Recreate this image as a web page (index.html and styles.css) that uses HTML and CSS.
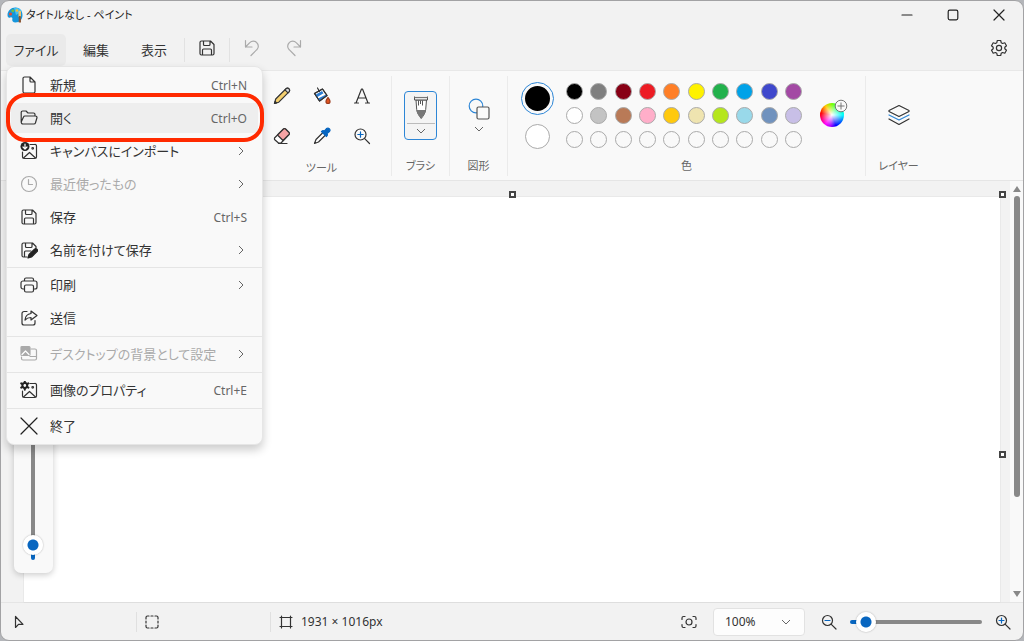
FILE: index.html
```html
<!DOCTYPE html>
<html lang="ja">
<head>
<meta charset="utf-8">
<meta name="viewport" content="width=device-width, initial-scale=1">
<title>タイトルなし - ペイント</title>
<link rel="stylesheet" href="styles.css">
</head>
<body>
<svg class="sprite" aria-hidden="true">
  <symbol id="chev-right" viewBox="0 0 8 10"><path d="M2 1l4 4-4 4"/></symbol>
  <symbol id="chev-down" viewBox="0 0 10 8"><path d="M1 2l4 4 4-4"/></symbol>
  <symbol id="save" viewBox="0 0 18 18"><path d="M3.500 2h9L16 5.500v9a1.500 1.500 0 0 1-1.500 1.500h-11A1.500 1.500 0 0 1 2 14.500v-11A1.500 1.500 0 0 1 3.500 2zM5.500 2v3.500a1 1 0 0 0 1 1h4.500a1 1 0 0 0 1-1V2M4.500 16v-5a1 1 0 0 1 1-1h7a1 1 0 0 1 1 1v5"/></symbol>
</svg>
<div class="window">
  <header class="titlebar">
    <svg class="app-icon" viewBox="0 0 16 16">
      <path d="M8.500.5C4 .5.500 4 .500 8c0 2.500 1.200 3 2.800 2.500 1.500-.5 2.500.3 2 1.800-.4 1.900.7 3.200 3.200 3.200 4.300 0 7-3.200 7-7.500s-3-7.500-7-7.500z" fill="#1696dc"/>
      <path d="M7 1c3-1 6.500 0 8 3.500L9 8z" fill="#45c0f0"/>
      <circle cx="3.500" cy="7" r="1.600" fill="#e24b35"/><circle cx="5.800" cy="3.800" r="1.500" fill="#6cc04a"/><circle cx="10" cy="3.500" r="1.300" fill="#f4bd35"/>
      <path d="M11.500 4.500c.5-1 2-1 2.500 0V10h-2.500z" fill="#f2c16b"/><path d="M11.800 9h1.900l.3 6.500h-2.300z" fill="#8b5633"/>
    </svg>
    <h1 class="title">タイトルなし - ペイント</h1>
    <div class="window-controls">
      <button class="win-btn" aria-label="最小化"><svg class="ico dark" viewBox="0 0 12 12"><path d="M1 6h10"/></svg></button>
      <button class="win-btn" aria-label="最大化"><svg class="ico dark" viewBox="0 0 12 12"><rect x="1.200" y="1.200" width="9.600" height="9.600" rx="1.500"/></svg></button>
      <button class="win-btn" aria-label="閉じる"><svg class="ico dark" viewBox="0 0 12 12"><path d="M1 1l10 10M11 1L1 11"/></svg></button>
    </div>
  </header>

  <nav class="menubar">
    <button class="tab open">ファイル</button>
    <button class="tab">編集</button>
    <button class="tab">表示</button>
    <span class="vsep"></span>
    <button class="tool-btn" aria-label="保存"><svg class="ico i18"><use href="#save"/></svg></button>
    <span class="vsep"></span>
    <button class="tool-btn" aria-label="元に戻す"><svg class="ico i18 faded" viewBox="0 0 18 18"><path d="M2.500 1.500v6.500h6.500M2.500 8l4.300-4.300a4.800 4.800 0 0 1 7 0 4.800 4.800 0 0 1 0 7L8 16.500"/></svg></button>
    <button class="tool-btn" aria-label="やり直し"><svg class="ico i18 faded" viewBox="0 0 18 18"><path d="M15.500 1.500v6.500H9M15.500 8l-4.300-4.300a4.800 4.800 0 0 0-7 0 4.800 4.800 0 0 0 0 7L10 16.500"/></svg></button>
    <button class="win-btn settings" aria-label="設定"><svg class="ico i18" viewBox="0 0 18 18"><circle cx="9" cy="9" r="2.600"/><path d="M7.300 1.500h3.400l.5 2.200 1.400.8 2.200-.7 1.700 2.900-1.700 1.500v1.600l1.700 1.500-1.700 2.900-2.200-.7-1.400.8-.5 2.200H7.300l-.5-2.200-1.400-.8-2.200.7-1.700-2.900 1.700-1.500V8.200L1.500 6.700l1.700-2.900 2.200.7 1.400-.8z"/></svg></button>
  </nav>

  <section class="ribbon">
    <div class="group tools">
      <div class="group-body tool-grid">
        <button class="tool-btn" aria-label="鉛筆"><svg class="ico i18" viewBox="0 0 18 18"><path d="M1.500 16.500l1.200-4.500L13 1.800a2 2 0 0 1 3 3L5.800 15.200z" fill="#f5d06f"/><path d="M12 2.800L13 1.800a2 2 0 0 1 3 3l-1 1z" fill="#ddd"/><path d="M1.500 16.500l.6-2 1.500 1.400z" fill="#333"/></svg></button>
        <button class="tool-btn" aria-label="塗りつぶし"><svg class="ico i18" viewBox="0 0 18 18"><path d="M1.500 6.500L9.500 2l4.500 6.500L6.500 14z" fill="#fff"/><path d="M2.500 7.800L9 4l1.500 2.200-6.500 4zM5 11.500l7.500-3.800 1 .8L6.500 13.500z" fill="#2c7dd2" stroke="none"/><path d="M1.500 6.500L9.500 2l4.500 6.500L6.500 14zM4.500 1l2 3.500"/><path d="M15 10.500c1 1.500 2 2.700 2 4a2 2 0 0 1-4 0c0-1.300 1-2.500 2-4z" fill="#e05520" stroke="#9c3b1d"/></svg></button>
        <button class="tool-btn" aria-label="テキスト"><svg class="ico i18" viewBox="0 0 18 18"><path d="M3 16L8.500 2h1L15 16M5 11h8M1.500 16h4M12.500 16h4"/></svg></button>
        <button class="tool-btn" aria-label="消しゴム"><svg class="ico i18" viewBox="0 0 18 18"><path d="M1.500 11L10.500 2a1.500 1.500 0 0 1 2 0L16 5.500a1.500 1.500 0 0 1 0 2L8 16H5.500L1.500 12.500z" fill="#fff"/><path d="M4.500 8l6-6a1.500 1.500 0 0 1 2 0L16 5.500a1.500 1.500 0 0 1 0 2l-6 6z" fill="#f6a4a5"/><path d="M5.500 16.500H14"/></svg></button>
        <button class="tool-btn" aria-label="スポイト"><svg class="ico i18" viewBox="0 0 18 18"><path d="M9.500 6L3 12.500l-1.500 4 4-1.500L12 8.500" fill="#fff"/><path d="M8.500 4.500l1.500-1 1.500.5 2-2.400c2-1.500 4.500.9 3 2.900L14 6.500l.5 1.500-1 1.500z" fill="#0866c0" stroke="#0866c0"/></svg></button>
        <button class="tool-btn" aria-label="拡大鏡"><svg class="ico i18" viewBox="0 0 18 18"><circle cx="7.500" cy="7.500" r="5.500"/><path d="M11.700 11.700L16.500 16.500"/><path d="M4.800 7.500h5.400M7.500 4.800v5.400" stroke="#0866c0"/></svg></button>
      </div>
      <h2 class="caption">ツール</h2>
    </div>

    <div class="group narrow">
      <div class="group-body">
        <button class="brush" aria-label="ブラシ">
          <svg class="brush-art" viewBox="0 0 18 26"><path d="M4 5h10.500l-.8 9.500c-.3 3.500-2.500 6.500-4.500 9-2-2.500-4.200-5.500-4.500-9z" fill="#fff" stroke="#555"/><path d="M4.500 15h9.300c-.3 3.500-2.600 6-4.600 8.500-2-2.500-4.400-5-4.700-8.500z" fill="#777"/><path d="M2.500 1.500v3.500h13V1.500" fill="#e6e6e6" stroke="#555"/><path d="M2.500 2.500h13" stroke="#777"/><path d="M6.500 5.500v5M8.500 5.500v3.500M10.500 5.500v5" stroke="#555" fill="none"/></svg>
          <span class="brush-more"><svg class="chev"><use href="#chev-down"/></svg></span>
        </button>
      </div>
      <h2 class="caption">ブラシ</h2>
    </div>

    <div class="group narrow">
      <div class="group-body">
        <button class="shapes" aria-label="図形">
          <svg class="ico i22" viewBox="0 0 22 22"><circle cx="8" cy="8" r="6.800" stroke="#2d86d6"/><rect x="9" y="9" width="12" height="12" rx="1.500" fill="#fafafa" stroke="#555"/></svg>
          <svg class="chev"><use href="#chev-down"/></svg>
        </button>
      </div>
      <h2 class="caption">図形</h2>
    </div>

    <div class="group colors">
      <div class="group-body color-row">
        <div class="current">
          <button class="current-ring" aria-label="色 1"><span class="primary"></span></button>
          <button class="secondary" aria-label="色 2"></button>
        </div>
        <div class="palette">
          <button class="swatch black" aria-label="黒"></button><button class="swatch gray" aria-label="灰色"></button><button class="swatch maroon" aria-label="濃い赤"></button><button class="swatch red" aria-label="赤"></button><button class="swatch orange" aria-label="オレンジ"></button><button class="swatch yellow" aria-label="黄"></button><button class="swatch green" aria-label="緑"></button><button class="swatch cyan" aria-label="水色"></button><button class="swatch indigo" aria-label="藍色"></button><button class="swatch purple" aria-label="紫"></button>
          <button class="swatch white" aria-label="白"></button><button class="swatch silver" aria-label="薄い灰色"></button><button class="swatch brown" aria-label="茶"></button><button class="swatch rose" aria-label="ローズ"></button><button class="swatch gold" aria-label="ゴールド"></button><button class="swatch cream" aria-label="薄い黄"></button><button class="swatch lime" aria-label="ライム"></button><button class="swatch sky" aria-label="薄い青緑"></button><button class="swatch steel" aria-label="ブルーグレー"></button><button class="swatch lavender" aria-label="ラベンダー"></button>
          <button class="swatch" aria-label="空き 1"></button><button class="swatch" aria-label="空き 2"></button><button class="swatch" aria-label="空き 3"></button><button class="swatch" aria-label="空き 4"></button><button class="swatch" aria-label="空き 5"></button><button class="swatch" aria-label="空き 6"></button><button class="swatch" aria-label="空き 7"></button><button class="swatch" aria-label="空き 8"></button><button class="swatch" aria-label="空き 9"></button><button class="swatch" aria-label="空き 10"></button>
        </div>
        <button class="wheel" aria-label="色の編集"><svg class="wheel-plus" viewBox="0 0 14 14"><circle cx="7" cy="7" r="5.800"/><path d="M7 3.500v7M3.500 7h7"/></svg></button>
      </div>
      <h2 class="caption">色</h2>
    </div>

    <div class="group layers">
      <div class="group-body">
        <button class="tool-btn" aria-label="レイヤー"><svg class="ico i22" viewBox="0 0 22 22"><path d="M11 1.500L21 6.500v1L11 12.500 1 7.500v-1z"/><path d="M1 11l10 5 10-5" stroke="#2d86d6"/><path d="M1 15l10 5.500L21 15"/></svg></button>
      </div>
      <h2 class="caption">レイヤー</h2>
    </div>
  </section>

  <main class="workspace">
    <div class="canvas-area">
      <div class="canvas"></div>
      <span class="handle top"></span><span class="handle corner"></span><span class="handle side"></span>
    </div>
    <div class="scrollbar">
      <svg class="arrow" viewBox="0 0 8 6"><path d="M4 0l4 6H0z"/></svg>
      <div class="scroll-track"><div class="scroll-thumb"></div></div>
      <svg class="arrow" viewBox="0 0 8 6"><path d="M0 0h8L4 6z"/></svg>
    </div>
    <div class="size-panel"><input class="size-slider" type="range" min="0" max="100" value="2" aria-label="ブラシのサイズ"></div>
  </main>

  <footer class="statusbar">
    <div class="status-cell"><svg class="ico i14" viewBox="0 0 14 14"><path d="M3.500 1.500v11l3-3.200h4.500z"/></svg></div>
    <div class="status-cell"><svg class="ico i14" viewBox="0 0 14 14"><path d="M1 4V2.500A1.500 1.500 0 0 1 2.500 1H4M10 1h1.500A1.500 1.500 0 0 1 13 2.500V4M13 10v1.500a1.500 1.500 0 0 1-1.500 1.500H10M4 13H2.500A1.500 1.500 0 0 1 1 11.500V10M6 1h2M6 13h2M1 6v2M13 6v2"/></svg></div>
    <div class="status-cell last"><svg class="ico i14" viewBox="0 0 14 14"><path d="M2.500 1v12M11.500 1v12M1 2.500h12M1 11.500h12"/></svg><span>1931 × 1016px</span></div>
    <div class="zoom">
      <button class="plain" aria-label="画面に合わせる"><svg class="ico i16" viewBox="0 0 16 16"><circle cx="8" cy="8" r="3"/><path d="M1 5.500V4a1.500 1.500 0 0 1 1.500-1.500H4M12 2.500h1.500A1.500 1.500 0 0 1 15 4v1.500M15 10.500V12a1.500 1.500 0 0 1-1.500 1.500H12M4 13.500H2.500A1.500 1.500 0 0 1 1 12v-1.500"/></svg></button>
      <div class="zoom-box"><select class="zoom-select" aria-label="ズーム"><option>100%</option></select><svg class="chev"><use href="#chev-down"/></svg></div>
      <button class="plain" aria-label="縮小"><svg class="ico i16" viewBox="0 0 16 16"><circle cx="6.500" cy="6.500" r="5"/><path d="M10.300 10.300L15 15"/><path d="M4 6.500h5" stroke="#0866c0"/></svg></button>
      <input class="zoom-slider" type="range" min="0" max="100" value="5" aria-label="ズーム倍率">
      <button class="plain" aria-label="拡大"><svg class="ico i16" viewBox="0 0 16 16"><circle cx="6.500" cy="6.500" r="5"/><path d="M10.300 10.300L15 15"/><path d="M4 6.500h5M6.500 4v5" stroke="#0866c0"/></svg></button>
    </div>
  </footer>

  <div class="file-menu" role="menu">
    <div class="menu-group">
      <button class="item" role="menuitem"><svg class="ico i18" viewBox="0 0 18 18"><path d="M4.500 1H10l5 5v9.500a1.500 1.500 0 0 1-1.500 1.500h-9A1.500 1.500 0 0 1 3 15.500v-13A1.500 1.500 0 0 1 4.500 1zM10 1v4a1 1 0 0 0 1 1h4"/></svg><span class="label">新規</span><kbd>Ctrl+N</kbd></button>
      <button class="item marked" role="menuitem"><svg class="ico i18" viewBox="0 0 18 18"><path d="M1.200 13V3.500A1.500 1.500 0 0 1 2.700 2H6l2 2h5.500A1.500 1.500 0 0 1 15 5.500V7M5 7h10.500a1.500 1.500 0 0 1 1.400 2l-1.500 5a1.500 1.500 0 0 1-1.400 1H3a1.800 1.800 0 0 1-1.700-2.300L3.500 8A1.500 1.500 0 0 1 5 7z"/></svg><span class="label">開く</span><kbd>Ctrl+O</kbd></button>
      <button class="item" role="menuitem"><svg class="ico i18" viewBox="0 0 18 18"><path d="M10 2.500h4.500A1.500 1.500 0 0 1 16.500 4v11a1.500 1.500 0 0 1-1.500 1.500H4A1.500 1.500 0 0 1 2.500 15v-5M3.500 16l6-5.500 6 5.500"/><circle cx="12.700" cy="6.300" r=".8"/><circle cx="5" cy="4.500" r="4.500" fill="#222" stroke="none"/><path d="M5 2v5M3 5l2 2 2-2" stroke="#fff"/></svg><span class="label">キャンバスにインポート</span><svg class="chev side"><use href="#chev-right"/></svg></button>
      <button class="item" role="menuitem" disabled><svg class="ico i18" viewBox="0 0 18 18"><circle cx="9" cy="9" r="7.500"/><path d="M8.500 4.500v5h4"/></svg><span class="label">最近使ったもの</span><svg class="chev side"><use href="#chev-right"/></svg></button>
      <button class="item" role="menuitem"><svg class="ico i18"><use href="#save"/></svg><span class="label">保存</span><kbd>Ctrl+S</kbd></button>
      <button class="item" role="menuitem"><svg class="ico i18" viewBox="0 0 18 18"><path d="M7 16H3.500A1.500 1.500 0 0 1 2 14.500v-11A1.500 1.500 0 0 1 3.500 2h9L16 5.500V7M5.500 2v3.500a1 1 0 0 0 1 1h4.500a1 1 0 0 0 1-1V2M4.500 16v-5a1 1 0 0 1 1-1H11"/><path d="M8 17l1-3.500 5.500-5.200a1.500 1.500 0 0 1 2.500 2.300L11.500 16z" fill="#222" stroke="#222"/></svg><span class="label">名前を付けて保存</span><svg class="chev side"><use href="#chev-right"/></svg></button>
    </div>
    <div class="menu-group">
      <button class="item" role="menuitem"><svg class="ico i18" viewBox="0 0 18 18"><path d="M4.500 5V3.500A1.500 1.500 0 0 1 6 2h6a1.500 1.500 0 0 1 1.500 1.500V5M4.500 13H3a2 2 0 0 1-2-2V7a2 2 0 0 1 2-2h12a2 2 0 0 1 2 2v4a2 2 0 0 1-2 2h-1.500"/><rect x="4.500" y="9" width="9" height="7" rx="1.500"/></svg><span class="label">印刷</span><svg class="chev side"><use href="#chev-right"/></svg></button>
      <button class="item" role="menuitem"><svg class="ico i18" viewBox="0 0 18 18"><path d="M7 2.500H4A2 2 0 0 0 2 4.500V14a2 2 0 0 0 2 2h9a2 2 0 0 0 2-2v-2.500M11 2l6 4.500-6 4.500V8.500c-3 0-4.500.8-6 2.500.3-4 2.500-6 6-6.500z"/></svg><span class="label">送信</span></button>
    </div>
    <div class="menu-group">
      <button class="item" role="menuitem" disabled><svg class="ico i18" viewBox="0 0 18 18"><path d="M11 4h4a1.500 1.500 0 0 1 1.500 1.500v8A1.500 1.500 0 0 1 15 15H3a1.500 1.500 0 0 1-1.500-1.500V12M10 11.500h6.500"/><rect x="1" y="1.500" width="9" height="9" rx="1" fill="#aaa"/><path d="M2 9.500L5.500 6 9 9.500" stroke="#fff"/></svg><span class="label">デスクトップの背景として設定</span><svg class="chev side"><use href="#chev-right"/></svg></button>
    </div>
    <div class="menu-group">
      <button class="item" role="menuitem"><svg class="ico i18" viewBox="0 0 18 18"><path d="M10 2.500h4.500A1.500 1.500 0 0 1 16.500 4v11a1.500 1.500 0 0 1-1.500 1.500H4A1.500 1.500 0 0 1 2.500 15v-5M3.500 16l6-5.500 6 5.500"/><circle cx="12.700" cy="6.300" r=".8"/><circle cx="4.800" cy="4.500" r="2.400" stroke="#222" stroke-width="2"/><path d="M4.800.3v1.500M4.800 7.200v1.500M1.200 2.400l1.200.7M7.200 5.900l1.200.7M1.200 6.600l1.200-.7M7.200 3.100l1.200-.7" stroke="#222" stroke-width="2"/></svg><span class="label">画像のプロパティ</span><kbd>Ctrl+E</kbd></button>
    </div>
    <div class="menu-group">
      <button class="item" role="menuitem"><svg class="ico i18 dark" viewBox="0 0 18 18"><path d="M1 1l16 16M17 1L1 17"/></svg><span class="label">終了</span></button>
    </div>
  </div>
</div>
</body>
</html>
```
FILE: styles.css
```css
* { box-sizing: border-box; }

body {
  margin: 0;
  background: #b4b6ba;
  color: #333;
  font: 12px/16px "Noto Sans", "Noto Sans CJK JP", sans-serif;
  font-feature-settings: "palt";
}

button, select, input, kbd { font: inherit; font-feature-settings: inherit; color: inherit; margin: 0; }
button { padding: 0; border: 0; background: none; }
h1, h2 { margin: 0; font-weight: 400; }
svg { display: block; flex: none; }

.sprite { position: absolute; width: 0; height: 0; }

.window {
  position: relative;
  display: flex;
  flex-direction: column;
  height: 100vh;
  min-height: 480px;
  overflow: hidden;
  border: 1px solid #a2a2a4;
  border-radius: 9px;
  background: #f2f2f2;
}

/* Icons */
.ico { width: 12px; height: 12px; fill: none; stroke: #333; stroke-width: 1.2; stroke-linejoin: round; stroke-linecap: round; }
.ico.dark { stroke: #222; }
.ico.faded { stroke: #aaa; }
.i14 { width: 14px; height: 14px; }
.i16 { width: 16px; height: 16px; }
.i18 { width: 18px; height: 18px; }
.i22 { width: 22px; height: 22px; }
.chev { width: 10px; height: 8px; fill: none; stroke: #666; stroke-width: 1; }
.chev.side { width: 8px; height: 10px; }

/* Title bar */
.titlebar { display: flex; align-items: center; height: 28px; padding: 0 1px 0 6px; }
.app-icon { width: 16px; height: 16px; }
.title { margin-left: 3px; font-size: 11px; color: #222; }
.window-controls { display: flex; margin-left: auto; }
.win-btn { display: grid; place-items: center; width: 46px; height: 28px; }

/* Menu bar */
.menubar { display: flex; align-items: center; gap: 2px; height: 41px; padding: 0 1px 0 5px; }
.tab { height: 32px; padding: 0 15px; border-radius: 5px; font-size: 13px; }
.tab.open { width: 60px; padding: 0; background: #eaeaea; }
.vsep { width: 1px; height: 24px; background: #e2e2e2; }
.tool-btn { display: grid; place-items: center; width: 40px; height: 40px; }
.menubar .tool-btn, .settings { margin-bottom: 3px; }
.settings { margin-left: auto; }

/* Ribbon */
.ribbon {
  display: flex;
  height: 111px;
  padding: 5px 0 4px 251px;
  border-top: 1px solid #e8e8e8;
  border-bottom: 1px solid #e5e5e5;
  background: #f9f9f9;
}
.group { display: flex; flex-direction: column; border-right: 1px solid #ebebeb; }
.group-body { display: grid; place-items: center; flex: 1; }
.caption { padding: 4px 0 2px; font-size: 11px; text-align: center; color: #666; }
.tools { width: 140px; }
.tool-grid { grid-template-columns: repeat(3, 40px); justify-content: center; }
.narrow { width: 58px; }
.colors { width: 358px; }
.layers { width: 65px; border-right: 0; }

.brush { display: flex; flex-direction: column; align-items: center; width: 33px; height: 49px; border: 1px solid #2d86d6; border-radius: 4px; background: #f4f4f4; }
.brush-art { width: 18px; height: 26px; margin: 3px 0 2px; }
.brush-more { display: grid; place-items: center; flex: 1; width: 28px; border-top: 1px solid #bbb; }
.shapes { display: grid; justify-items: center; gap: 5px; }

.color-row { display: flex; align-items: center; padding-left: 13px; }
.current { display: grid; justify-items: center; gap: 9px; width: 33px; }
.current-ring { display: grid; place-items: center; width: 33px; height: 33px; border: 1px solid #2d86d6; border-radius: 50%; }
.primary { width: 25px; height: 25px; border-radius: 50%; background: #000; }
.secondary { width: 25px; height: 25px; border: 1px solid #aaa; border-radius: 50%; background: #fff; }
.palette { display: grid; grid-template-columns: repeat(10, 17px); justify-content: space-between; row-gap: 7px; width: 236px; margin-left: 12px; }
.swatch { width: 17px; height: 17px; border: 1px solid #aaa; border-radius: 50%; }
.black { background: #000; }
.gray { background: #7f7f7f; }
.maroon { background: #880015; }
.red { background: #ed1c24; }
.orange { background: #ff7f27; }
.yellow { background: #fff200; }
.green { background: #22b14c; }
.cyan { background: #00a2e8; }
.indigo { background: #3f48cc; }
.purple { background: #a349a4; }
.white { background: #fff; }
.silver { background: #c3c3c3; }
.brown { background: #b97a57; }
.rose { background: #ffaec9; }
.gold { background: #ffc90e; }
.cream { background: #efe4b0; }
.lime { background: #b5e61d; }
.sky { background: #99d9ea; }
.steel { background: #7092be; }
.lavender { background: #c8bfe7; }

.wheel {
  position: relative;
  width: 24px;
  height: 24px;
  margin-left: 18px;
  border-radius: 50%;
  background: radial-gradient(circle, #fff, transparent 65%), conic-gradient(from 0deg, #7f0, #0f8, #0ff 90deg, #06f, #00f 160deg, #a0f, #f0f 215deg, #f00 280deg, #fc0 325deg, #7f0);
}
.wheel-plus { position: absolute; top: -4px; right: -4px; width: 14px; height: 14px; fill: #f9f9f9; stroke: #777; }

/* Workspace */
.workspace { position: relative; display: flex; flex: 1; min-height: 0; }
.canvas-area { position: relative; flex: 1; padding: 16px 10px 0 23px; }
.canvas { height: 100%; background: #fff; box-shadow: 0 0 1px #bbb; }
.handle { position: absolute; width: 7px; height: 7px; border: 2px solid #444; background: #fff; }
.handle.top { top: 10px; left: 508px; }
.handle.corner { top: 10px; right: 4px; }
.handle.side { top: 270px; right: 4px; }
.scrollbar { display: flex; flex-direction: column; align-items: center; gap: 4px; width: 13px; padding: 5px 0; background: #f9f9f9; }
.arrow { width: 8px; height: 6px; fill: #888; }
.scroll-track { flex: 1; }
.scroll-thumb { width: 6px; height: 77%; border-radius: 3px; background: #888; }

.size-panel { position: absolute; left: 13px; bottom: 29px; width: 39px; padding: 13px 9px; border-radius: 7px; background: #f9f9f9; box-shadow: 0 2px 6px #0003; }
.size-slider, .zoom-slider { display: block; appearance: none; background: none; }
.size-slider { writing-mode: vertical-lr; direction: rtl; width: 20px; height: 260px; }
.size-slider::-webkit-slider-runnable-track { width: 4px; border-radius: 2px; background: linear-gradient(to top, #0866c0 15px, #888 15px); }
.zoom-slider { width: 132px; height: 20px; }
.zoom-slider::-webkit-slider-runnable-track { height: 4px; border-radius: 2px; background: linear-gradient(to right, #0866c0 15px, #888 15px); }
input::-webkit-slider-thumb { appearance: none; width: 20px; height: 20px; border-radius: 50%; background: radial-gradient(circle, #0866c0 5px, #fff 6px); box-shadow: 0 0 2px #0005; }
.size-slider::-webkit-slider-thumb { margin-left: -8px; }
.zoom-slider::-webkit-slider-thumb { margin-top: -8px; }

/* Status bar */
.statusbar { display: flex; align-items: center; height: 38px; padding-right: 12px; border-top: 1px solid #e5e5e5; }
.status-cell { display: flex; align-items: center; gap: 8px; width: 134px; height: 20px; padding-left: 8px; border-right: 1px solid #e0e0e0; }
.status-cell:first-child { width: 136px; padding-left: 11px; }
.status-cell.last { width: auto; border: 0; }
.zoom { display: flex; align-items: center; gap: 13px; margin-left: auto; }
.zoom-box { position: relative; margin: 0 3px; }
.zoom-select { display: block; appearance: none; width: 92px; height: 28px; padding: 0 11px; border: 1px solid #e2e2e2; border-radius: 4px; background: #fdfdfd; }
.zoom-box .chev { position: absolute; top: 10px; right: 14px; pointer-events: none; }

/* File menu */
.file-menu {
  position: absolute;
  top: 65px;
  left: 5px;
  width: 257px;
  border: 1px solid #e6e6e6;
  border-radius: 8px;
  background: #f9f9f9;
  box-shadow: 0 5px 10px #0003;
}
.menu-group { padding: 0 4px 2px; }
.menu-group:first-child { padding: 1px 4px; }
.menu-group + .menu-group { border-top: 1px solid #e5e5e5; }
.item { position: relative; display: flex; align-items: center; width: 100%; height: 33px; padding: 0 11px 0 9px; text-align: left; }
.item:disabled { color: #aaa; }
.item:disabled .ico { stroke: #aaa; }
.label { flex: 1; margin-left: 12px; font-size: 13px; line-height: 20px; white-space: nowrap; }
.item .chev { margin-right: 2px; }
.item kbd { font-size: 12px; color: #666; padding-top: 3px; }
.item.marked { background: linear-gradient(#eee, #eee) center / 100% 30px no-repeat; }
.item.marked::after { content: ""; position: absolute; inset: -8px -6px -8px -5px; border: 4px solid #ff2a00; border-radius: 20px; }
```
